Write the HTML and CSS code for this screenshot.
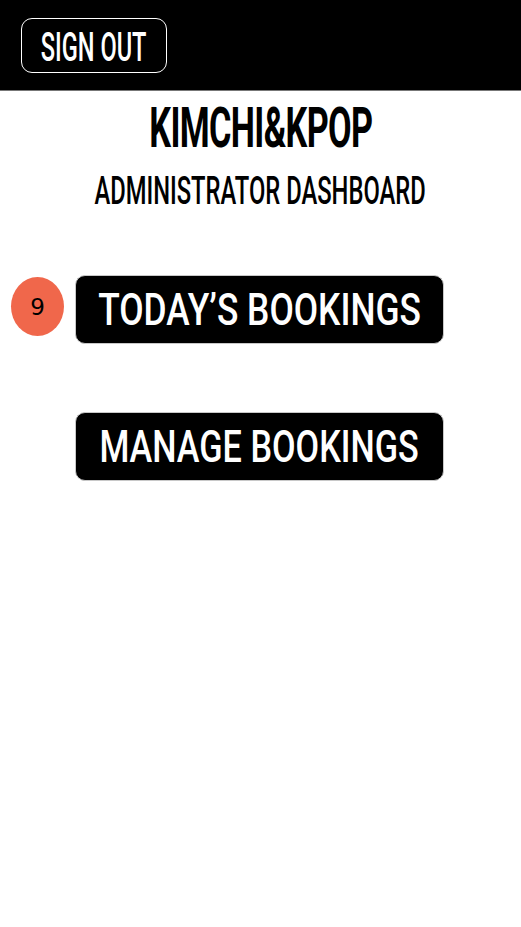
FILE: index.html
```html
<!DOCTYPE html>
<html lang="en">
<head>
<meta charset="utf-8">
<title>Kimchi&amp;Kpop Admin</title>
<link rel="stylesheet" href="styles.css">
</head>
<body>
<header class="topbar">
  <button class="signout"><span class="squeeze">SIGN OUT</span></button>
</header>
<main class="content">
  <h1 class="title"><span class="squeeze">KIMCHI&amp;KPOP</span></h1>
  <h2 class="subtitle"><span class="squeeze">ADMINISTRATOR DASHBOARD</span></h2>
  <div class="actions">
    <div class="action">
      <span class="badge">9</span>
      <button class="bigbtn"><span class="squeeze">TODAY’S BOOKINGS</span></button>
    </div>
    <div class="action">
      <button class="bigbtn"><span class="squeeze manage">MANAGE BOOKINGS</span></button>
    </div>
  </div>
</main>
</body>
</html>
```
FILE: styles.css
```css
* { box-sizing: border-box; }
html, body { margin: 0; padding: 0; background: #fff; }
body { font-family: Roboto, "Liberation Sans", sans-serif; }

.squeeze {
  display: inline-block;
  white-space: nowrap;
  transform-origin: center;
}

.topbar {
  height: 91px;
  background: #000;
  border-bottom: 1px solid #777;
  padding: 18px 21px 0;
}

.signout {
  width: 146px;
  height: 55px;
  background: #000;
  border: 1.5px solid #fff;
  border-radius: 11px;
  color: #fff;
  font-family: Roboto, "Liberation Sans", sans-serif;
  font-weight: 500;
  font-size: 40px;
  line-height: 40px;
  padding: 5px 0 0;
  display: flex;
  align-items: center;
  justify-content: center;
  overflow: visible;
}
.signout .squeeze { transform: scaleX(0.59); }

.content {
  display: flex;
  flex-direction: column;
  align-items: center;
}

.title {
  margin: 9px 0 0;
  font-size: 56px;
  line-height: 56px;
  font-weight: 700;
  color: #000;
  width: 100%;
  display: flex;
  justify-content: center;
}
.title .squeeze { transform: scaleX(0.61); letter-spacing: -1px; }

.subtitle {
  margin: 15px 0 0;
  font-size: 38px;
  line-height: 40px;
  font-weight: 500;
  color: #000;
  width: 100%;
  display: flex;
  justify-content: center;
}
.subtitle .squeeze { transform: scaleX(0.625); }

.actions {
  margin-top: 64px;
  padding-right: 2px;
  display: flex;
  flex-direction: column;
  align-items: center;
  gap: 68px;
}

.action { position: relative; }

.bigbtn {
  width: 369px;
  height: 69px;
  background: #000;
  border: 1px solid #c8c8c8;
  border-radius: 10px;
  color: #fff;
  font-family: Roboto, "Liberation Sans", sans-serif;
  font-weight: 500;
  font-size: 45px;
  line-height: 45px;
  padding: 0;
  display: flex;
  align-items: center;
  justify-content: center;
  overflow: visible;
}
.bigbtn .squeeze { transform: scaleX(0.785); }
.bigbtn .squeeze.manage { transform: scaleX(0.76); }

.badge {
  position: absolute;
  right: calc(100% + 11px);
  top: 2px;
  width: 53px;
  height: 59px;
  border-radius: 50%;
  background: #f0674b;
  color: #000;
  font-family: "DejaVu Sans", sans-serif;
  font-size: 23px;
  display: flex;
  align-items: center;
  justify-content: center;
}
```
